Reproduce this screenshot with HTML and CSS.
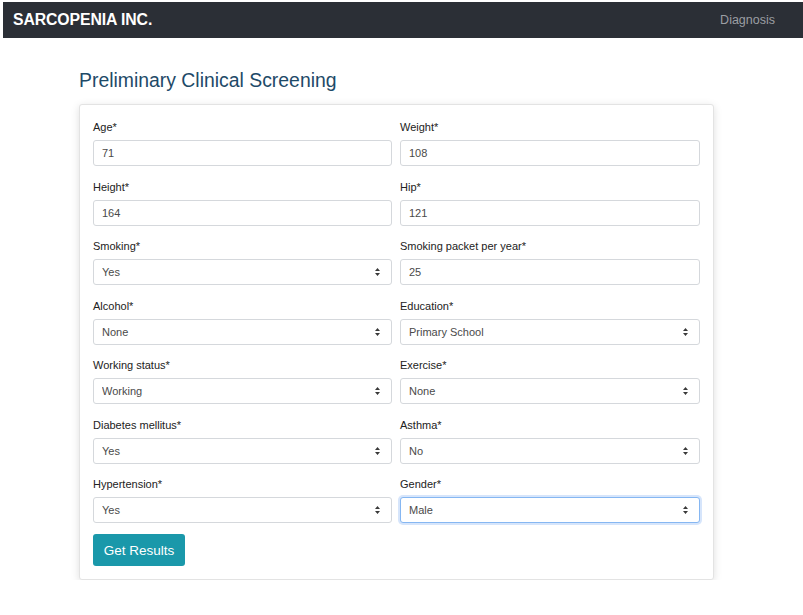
FILE: index.html
```html
<!DOCTYPE html>
<html lang="en">
<head>
<meta charset="utf-8">
<title>Sarcopenia Inc.</title>
<link rel="stylesheet" href="styles.css">
</head>
<body>
<div class="page">
  <nav class="navbar">
    <span class="brand">SARCOPENIA INC.</span>
    <a class="nav-link" href="#">Diagnosis</a>
  </nav>
  <main class="content">
    <h1 class="title">Preliminary Clinical Screening</h1>
    <form class="card">
      <div class="grid">
        <div class="group"><label class="label">Age*</label><input class="control" value="71"></div>
        <div class="group"><label class="label">Weight*</label><input class="control" value="108"></div>
        <div class="group"><label class="label">Height*</label><input class="control" value="164"></div>
        <div class="group"><label class="label">Hip*</label><input class="control" value="121"></div>
        <div class="group"><label class="label">Smoking*</label><div class="select-wrap"><select class="control select"><option>Yes</option></select><svg class="arrow" width="5" height="8" viewBox="0 0 5 8"><path d="M2.5 0L5 3H0Z M2.5 8L0 5H5Z" fill="#3a3a3a"/></svg></div></div>
        <div class="group"><label class="label">Smoking packet per year*</label><input class="control" value="25"></div>
        <div class="group"><label class="label">Alcohol*</label><div class="select-wrap"><select class="control select"><option>None</option></select><svg class="arrow" width="5" height="8" viewBox="0 0 5 8"><path d="M2.5 0L5 3H0Z M2.5 8L0 5H5Z" fill="#3a3a3a"/></svg></div></div>
        <div class="group"><label class="label">Education*</label><div class="select-wrap"><select class="control select"><option>Primary School</option></select><svg class="arrow" width="5" height="8" viewBox="0 0 5 8"><path d="M2.5 0L5 3H0Z M2.5 8L0 5H5Z" fill="#3a3a3a"/></svg></div></div>
        <div class="group"><label class="label">Working status*</label><div class="select-wrap"><select class="control select"><option>Working</option></select><svg class="arrow" width="5" height="8" viewBox="0 0 5 8"><path d="M2.5 0L5 3H0Z M2.5 8L0 5H5Z" fill="#3a3a3a"/></svg></div></div>
        <div class="group"><label class="label">Exercise*</label><div class="select-wrap"><select class="control select"><option>None</option></select><svg class="arrow" width="5" height="8" viewBox="0 0 5 8"><path d="M2.5 0L5 3H0Z M2.5 8L0 5H5Z" fill="#3a3a3a"/></svg></div></div>
        <div class="group"><label class="label">Diabetes mellitus*</label><div class="select-wrap"><select class="control select"><option>Yes</option></select><svg class="arrow" width="5" height="8" viewBox="0 0 5 8"><path d="M2.5 0L5 3H0Z M2.5 8L0 5H5Z" fill="#3a3a3a"/></svg></div></div>
        <div class="group"><label class="label">Asthma*</label><div class="select-wrap"><select class="control select"><option>No</option></select><svg class="arrow" width="5" height="8" viewBox="0 0 5 8"><path d="M2.5 0L5 3H0Z M2.5 8L0 5H5Z" fill="#3a3a3a"/></svg></div></div>
        <div class="group"><label class="label">Hypertension*</label><div class="select-wrap"><select class="control select"><option>Yes</option></select><svg class="arrow" width="5" height="8" viewBox="0 0 5 8"><path d="M2.5 0L5 3H0Z M2.5 8L0 5H5Z" fill="#3a3a3a"/></svg></div></div>
        <div class="group"><label class="label">Gender*</label><div class="select-wrap"><select class="control select focused"><option>Male</option></select><svg class="arrow" width="5" height="8" viewBox="0 0 5 8"><path d="M2.5 0L5 3H0Z M2.5 8L0 5H5Z" fill="#3a3a3a"/></svg></div></div>
      </div>
      <button type="button" class="btn">Get Results</button>
    </form>
  </main>
</div>
</body>
</html>
```

FILE: styles.css
```css
* { box-sizing: border-box; }
html, body { margin: 0; padding: 0; background: #fff; }
body { font-family: "Liberation Sans", Arial, sans-serif; color: #212529; }
.page { padding: 2px 0 0 3px; }
.navbar {
  height: 36px;
  background: #2b2f36;
  display: flex;
  align-items: center;
  justify-content: space-between;
  padding: 0 28px 0 10px;
}
.brand { color: #fff; font-weight: bold; font-size: 15.8px; letter-spacing: -0.1px; }
.nav-link { color: #9b9ea3; font-size: 12.5px; text-decoration: none; }
.content { padding: 30px 0 0 76px; width: 711px; }
.title {
  margin: 0 0 12px 0;
  font-weight: normal;
  font-size: 19.4px;
  line-height: 24px;
  color: #1e4a68;
}
.card {
  border: 1px solid #e3e3e3;
  border-radius: 3px;
  box-shadow: 0 2px 9px rgba(0,0,0,0.13);
  padding: 14px 14px 13px 13px;
  background: #fff;
}
.grid {
  display: grid;
  grid-template-columns: 299px 300px;
  column-gap: 8px;
}
.group { margin-bottom: 12.5px; }
.label { display: block; font-size: 11px; line-height: 16px; margin-bottom: 5px; color: #222; }
.control {
  display: block;
  width: 100%;
  height: 26px;
  border: 1px solid #d5d8dc;
  border-radius: 3px;
  padding: 0 8px;
  font-family: "Liberation Sans", Arial, sans-serif;
  font-size: 11px;
  color: #4a4a4a;
  background: #fff;
  outline: none;
}
.select { appearance: none; -webkit-appearance: none; }
.select-wrap { position: relative; }
.arrow { position: absolute; right: 12px; top: 9px; pointer-events: none; }
.focused { border-color: #86b7f2; box-shadow: 0 0 0 2px rgba(90,150,240,0.25); }
.btn {
  margin-top: -1.5px;
  width: 92px;
  height: 32px;
  border: none;
  border-radius: 3px;
  background: #1a98aa;
  color: #fff;
  font-family: "Liberation Sans", Arial, sans-serif;
  font-size: 13.5px;
  padding: 0;
}
```
